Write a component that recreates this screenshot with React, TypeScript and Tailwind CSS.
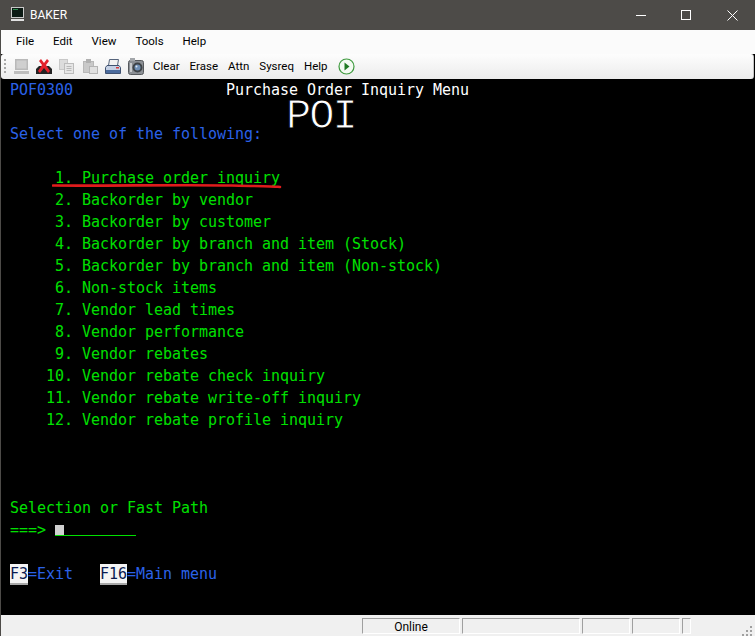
const menuItems = ['File', 'Edit', 'View', 'Tools', 'Help'];
const toolItems = ['Clear', 'Erase', 'Attn', 'Sysreq', 'Help'];

const options = [
  '     1. Purchase order inquiry',
  '     2. Backorder by vendor',
  '     3. Backorder by customer',
  '     4. Backorder by branch and item (Stock)',
  '     5. Backorder by branch and item (Non-stock)',
  '     6. Non-stock items',
  '     7. Vendor lead times',
  '     8. Vendor performance',
  '     9. Vendor rebates',
  '    10. Vendor rebate check inquiry',
  '    11. Vendor rebate write-off inquiry',
  '    12. Vendor rebate profile inquiry',
];

const panelClass = 'h-[16px] leading-[17px] text-center border border-[#a0a0a0] border-r-white border-b-white';

function Row({ className = '', children }: { className?: string; children?: React.ReactNode }) {
  return <div className={`h-[22px] leading-[22px] whitespace-pre ${className}`}>{children}</div>;
}

function FKey({ label }: { label: string }) {
  return (
    <span className="inline-block h-[21px] leading-[20px] bg-[#f4f4f4] text-[#0a1a50] border-b-2 border-[#a8a8a8]">
      {label}
    </span>
  );
}

function MonitorIcon() {
  return (
    <svg width="13" height="16" viewBox="0 0 13 16">
      <rect x="0" y="0" width="13" height="11" fill="#c9c9c9" />
      <rect x="1" y="1" width="11" height="9" fill="#0c1a14" />
      <rect x="2" y="2" width="5" height="1" fill="#2f8f4f" />
      <rect x="0" y="12" width="13" height="2" fill="#e2e2e2" />
    </svg>
  );
}

function ToolIcons() {
  return (
    <div className="flex items-center">
      <svg className="ml-[13px]" width="15" height="15" viewBox="0 0 15 15">
        <rect x="1" y="0" width="13" height="11" fill="#b9b9b9" />
        <rect x="2.5" y="1.5" width="10" height="8" fill="#cfcfcf" />
        <rect x="0" y="12" width="15" height="3" fill="#bdbdbd" />
      </svg>
      <svg className="ml-[7px]" width="16" height="16" viewBox="0 0 16 16">
        <path d="M0 10l3-3h10l3 3v5H0z" fill="#222" />
        <path d="M3 2l2-2 3 4 3-4 2 2-3 4 4 6-2 2-4-5-4 5-2-2 4-6z" fill="#e3202a" />
      </svg>
      <svg className="ml-[7px]" width="15" height="15" viewBox="0 0 15 15">
        <rect x="0.5" y="0.5" width="8" height="10" fill="#dcdcdc" stroke="#c8c8c8" />
        <rect x="5.5" y="4.5" width="9" height="10" fill="#e6e6e6" stroke="#bcbcbc" />
        <path d="M7.5 7.5h5M7.5 9.5h5M7.5 11.5h5" stroke="#b8b8b8" />
      </svg>
      <svg className="ml-[9px]" width="15" height="15" viewBox="0 0 15 15">
        <rect x="0.5" y="2.5" width="10" height="11" fill="#c9c9c9" stroke="#b8b8b8" />
        <rect x="3" y="0" width="5" height="4" fill="#b0b0b0" />
        <rect x="6.5" y="7.5" width="8" height="7" fill="#e0e0e0" stroke="#b4b4b4" />
      </svg>
      <svg className="ml-[7px]" width="16" height="16" viewBox="0 0 16 16">
        <path d="M4.5 0.5h9l-1 6h-9z" fill="#f2f2f2" stroke="#56657c" />
        <path d="M2 6.5h12l1.5 2v6H.5v-6z" fill="#c4d0e4" stroke="#3f5170" />
        <path d="M1 11h14v3H1z" fill="#4a6a9c" />
        <rect x="11" y="8" width="3" height="1.5" fill="#d63a3a" />
      </svg>
      <svg className="ml-[7px]" width="16" height="17" viewBox="0 0 16 17">
        <rect x="0.5" y="2.5" width="15" height="14" rx="2" fill="#8b8f94" stroke="#55585c" />
        <rect x="2" y="0" width="5" height="3" fill="#a3a6aa" />
        <circle cx="9.5" cy="9.5" r="5" fill="#3e4347" />
        <circle cx="9.5" cy="9.5" r="3" fill="#6f8fb5" />
        <circle cx="8.5" cy="8.5" r="1" fill="#dfe8f2" />
        <rect x="2" y="5" width="2" height="9" fill="#c8cacc" />
      </svg>
    </div>
  );
}

function PlayIcon() {
  return (
    <svg width="17" height="17" viewBox="0 0 17 17">
      <circle cx="8.5" cy="8.5" r="7.5" fill="#f4fbf2" stroke="#3f9a3f" strokeWidth="1.2" />
      <path d="M6.5 4.5l5 4-5 4z" fill="#1f7a22" />
    </svg>
  );
}

export default function App() {
  return (
    <div className="w-[755px] h-[636px] flex flex-col bg-black overflow-hidden font-['Roboto',sans-serif] border-l border-[#4d4b48]">
      {/* title bar */}
      <div className="h-[30px] shrink-0 flex items-center bg-[#4d4b48] text-white -ml-px">
        <div className="ml-[11px]">
          <MonitorIcon />
        </div>
        <span className="ml-[6px] text-[12px]">BAKER</span>
        <div className="ml-auto flex items-center">
          <div className="w-[10px] h-px bg-white mr-[35px]" />
          <div className="w-[10px] h-[10px] border border-white mr-[36px]" />
          <svg className="mr-[17px]" width="11" height="11" viewBox="0 0 11 11">
            <path d="M0.5 0.5l10 10M10.5 0.5l-10 10" stroke="#fff" />
          </svg>
        </div>
      </div>

      {/* menu bar */}
      <div className="h-[24px] shrink-0 flex items-center gap-[19px] pl-[15px] bg-[#fbfbfb] text-[11.5px] text-black">
        {menuItems.map((m) => (
          <span key={m}>{m}</span>
        ))}
      </div>

      {/* toolbar */}
      <div className="h-[25px] shrink-0 flex items-center relative mr-[1px] bg-gradient-to-b from-[#fdfdfd] to-[#ececec] rounded-[3px] border-r border-[#c4c4c4] text-[11.5px] text-black">
        <div className="absolute left-[3px] top-[5px] flex flex-col gap-[2px]">
          <i className="block w-[2px] h-[2px] bg-[#a8a8a8]" />
          <i className="block w-[2px] h-[2px] bg-[#a8a8a8]" />
          <i className="block w-[2px] h-[2px] bg-[#a8a8a8]" />
          <i className="block w-[2px] h-[2px] bg-[#a8a8a8]" />
        </div>
        <ToolIcons />
        <div className="flex items-center gap-[10px] ml-[9px]">
          {toolItems.map((t, i) => (
            <span key={i}>{t}</span>
          ))}
          <PlayIcon />
        </div>
      </div>

      {/* terminal */}
      <div className="flex-1 relative pl-[9px] text-[15px] tracking-[-0.03px] font-['DejaVu_Sans_Mono',monospace] text-[#00e000]">
        <Row>
          <span className="text-[#2b62e8]">POF0300</span>
          <span className="text-white">{'                 Purchase Order Inquiry Menu'}</span>
        </Row>
        <Row />
        <Row className="text-[#2b62e8]">Select one of the following:</Row>
        <Row />
        {options.map((o) => (
          <Row key={o}>{o}</Row>
        ))}
        <Row />
        <Row />
        <Row />
        <Row>Selection or Fast Path</Row>
        <Row>
          {'===> '}
          <span className="inline-block w-[81px] h-[11px] border-b border-[#00e000] align-[-1px] relative">
            <span className="absolute left-0 top-0 w-[9px] h-[10px] bg-[#d0d0d0]" />
          </span>
        </Row>
        <Row />
        <Row className="text-[#2b62e8]">
          <FKey label="F3" />
          {'=Exit   '}
          <FKey label="F16" />
          {'=Main menu'}
        </Row>

        {/* hand-drawn annotations */}
        <span className="absolute left-[285px] top-[23px] text-[42px] leading-[30px] tracking-[-2px] text-white [-webkit-text-stroke:1px_black] font-['Liberation_Mono',monospace]">
          POI
        </span>
        <svg className="absolute left-[51px] top-[103px]" width="232" height="8" viewBox="0 0 232 8">
          <path d="M1 3.5C60 4 130 2.5 180 3.5S222 4.5 228 5" fill="none" stroke="#e01c1c" strokeWidth="2.6" strokeLinecap="round" />
        </svg>
      </div>

      {/* status bar */}
      <div className="h-[21px] shrink-0 flex items-center justify-end gap-[2px] pr-[64px] relative bg-[#f0f0f0] text-[12px] text-black -ml-px">
        <div className={`w-[98px] ${panelClass}`}>Online</div>
        <div className={`w-[118px] ${panelClass}`} />
        <div className={`w-[48px] ${panelClass}`} />
        <div className={`w-[48px] ${panelClass}`} />
        <div className={`w-[9px] ${panelClass}`} />
        <svg className="absolute right-[3px] bottom-0" width="10" height="10" viewBox="0 0 10 10" fill="#a0a0a0">
          <rect x="8" y="0" width="2" height="2" />
          <rect x="4" y="4" width="2" height="2" />
          <rect x="8" y="4" width="2" height="2" />
          <rect x="0" y="8" width="2" height="2" />
          <rect x="4" y="8" width="2" height="2" />
          <rect x="8" y="8" width="2" height="2" />
        </svg>
      </div>
    </div>
  );
}
